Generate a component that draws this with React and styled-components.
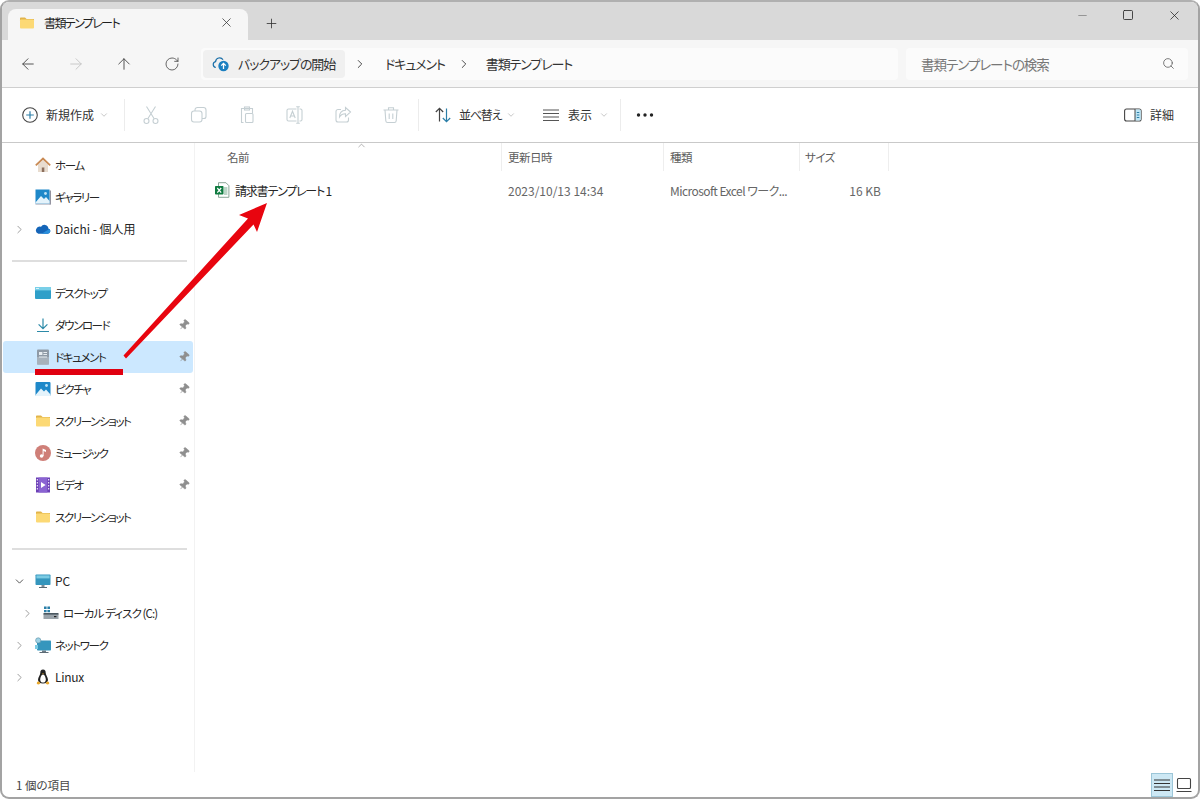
import React from 'react';
import styled, { createGlobalStyle } from 'styled-components';
import {
  ArrowLeft, ArrowRight, ArrowUp, RotateCw, X, Plus, Minus, Square,
  Search, ChevronRight, ChevronDown, ChevronUp, Pin,
} from 'lucide-react';

const GlobalStyle = createGlobalStyle`
  html, body { margin: 0; padding: 0; background: #fff; }
  body {
    font-family: "Noto Sans CJK JP", "Noto Sans", "Liberation Sans", sans-serif;
    font-feature-settings: "palt";
    color: #1f1f1f;
  }
`;

const Frame = styled.div`
  position: relative;
  width: 1200px;
  height: 799px;
  box-sizing: border-box;
  border: 2px solid #a3a3a3;
  border-top-color: #b0b0b0;
  border-radius: 9px;
  overflow: hidden;
  display: flex;
  flex-direction: column;
  background: #fff;
`;

const TitleBar = styled.div`
  height: 38px;
  flex: none;
  background: #d9d9d9;
  display: flex;
  align-items: flex-end;
  padding-left: 6px;
`;

const Tab = styled.div`
  width: 240px;
  height: 31px;
  box-sizing: border-box;
  background: #f6f6f6;
  border-radius: 8px 8px 0 0;
  display: flex;
  align-items: center;
  padding: 0 14px 4px 11px;
  font-size: 12px;
  letter-spacing: -1.6px;
`;

const TabTitle = styled.span`
  margin-left: 9px;
  flex: 1;
`;

const NewTab = styled.div`
  width: 46px;
  height: 30px;
  display: flex;
  align-items: center;
  justify-content: center;
  padding-bottom: 4px;
  box-sizing: border-box;
  color: #333;
`;

const WindowControls = styled.div`
  margin-left: auto;
  align-self: flex-start;
  display: flex;
  margin-right: 1px;
`;

const WindowButton = styled.div`
  width: 46px;
  height: 26px;
  display: flex;
  align-items: center;
  justify-content: center;
  color: #222;
`;

const AddressBar = styled.div`
  height: 48px;
  flex: none;
  box-sizing: border-box;
  background: #f6f6f6;
  border-bottom: 1px solid #cfcfcf;
  display: flex;
  align-items: center;
  padding-right: 10px;
`;

const NavButton = styled.div`
  width: 48px;
  height: 32px;
  flex: none;
  display: flex;
  align-items: center;
  justify-content: center;
  color: ${p => (p.$disabled ? '#c4c4c4' : '#444')};
`;

const NavGroup = styled.div`
  display: flex;
  margin-left: 2px;
  margin-right: 5px;
`;

const Breadcrumbs = styled.div`
  flex: 1;
  height: 32px;
  background: #fbfbfb;
  border-radius: 4px;
  display: flex;
  align-items: center;
  padding-left: 2px;
  font-size: 13px;
  letter-spacing: -1.1px;
`;

const BackupChip = styled.div`
  width: 142px;
  height: 28px;
  background: #f0f0f0;
  border-radius: 4px;
  display: flex;
  align-items: center;
  padding-left: 9px;
  box-sizing: border-box;
  gap: 8px;
  white-space: nowrap;
`;

const Crumb = styled.span`
  color: #333;
`;

const CrumbSep = styled.span`
  width: ${p => p.$width}px;
  box-sizing: border-box;
  padding-left: ${p => p.$pad}px;
  display: flex;
  color: #333;
`;

const SearchBox = styled.div`
  width: 282px;
  height: 32px;
  flex: none;
  margin-left: 8px;
  background: #fbfbfb;
  border-radius: 4px;
  box-sizing: border-box;
  display: flex;
  align-items: center;
  justify-content: space-between;
  padding: 0 13px 0 15px;
  font-size: 13.5px;
  color: #777;
  letter-spacing: -1px;
`;

const Toolbar = styled.div`
  height: 55px;
  flex: none;
  box-sizing: border-box;
  background: #fff;
  border-bottom: 1px solid #c9c9c9;
  padding-bottom: 1px;
  display: flex;
  align-items: center;
  font-size: 12px;
  color: #333;
`;

const ToolLabelButton = styled.div`
  display: flex;
  align-items: center;
  height: 32px;
  padding-left: ${p => p.$left || 0}px;
  width: ${p => p.$width}px;
  flex: none;
  box-sizing: border-box;
  gap: ${p => p.$gap || 7}px;
  letter-spacing: ${p => p.$spacing || 0}px;
`;

const ToolIcons = styled.div`
  display: flex;
  padding: 0 3px 0 2px;
`;

const ToolIcon = styled.div`
  width: 48px;
  height: 32px;
  display: flex;
  align-items: center;
  justify-content: center;
`;

const ToolSep = styled.div`
  width: 1px;
  height: 32px;
  flex: none;
  background: #ececec;
`;

const Caret = styled.span`
  display: flex;
  margin-left: -2px;
  color: #999;
`;

const DetailButton = styled.div`
  margin-left: auto;
  margin-right: 24px;
  display: flex;
  align-items: center;
  gap: 8px;
`;

const Body = styled.div`
  flex: 1;
  min-height: 0;
  display: flex;
`;

const Sidebar = styled.nav`
  width: 193px;
  flex: none;
  box-sizing: border-box;
  padding: 6px 1px 0 1px;
  border-right: 1px solid #f2f2f2;
  font-size: 11.5px;
  color: #262626;
`;

const NavRow = styled.div`
  height: 32px;
  display: flex;
  align-items: center;
  border-radius: 3px;
  background: ${p => (p.$selected ? '#cce8ff' : 'transparent')};
  padding-left: ${p => 8 + (p.$indent || 0)}px;
  padding-right: 3px;
`;

const Expander = styled.span`
  width: 16px;
  flex: none;
  display: flex;
  justify-content: center;
  color: #777;
`;

const NavIcon = styled.span`
  width: 16px;
  height: 16px;
  margin-left: 8px;
  margin-right: 4px;
  flex: none;
  display: flex;
`;

const NavLabel = styled.span`
  flex: 1;
  white-space: nowrap;
  font-size: ${p => (p.$latin ? '12px' : '11.5px')};
  letter-spacing: ${p => p.$spacing}px;
  margin-top: ${p => (p.$latin ? '-1px' : '0')};
`;

const PinMark = styled.span`
  display: flex;
  color: #8f8f8f;
  transform: rotate(40deg);
`;

const NavDivider = styled.div`
  height: 32px;
  display: flex;
  align-items: center;
  padding: 0 6px 0 9px;
  &::after {
    content: '';
    flex: 1;
    height: 2px;
    background: #dedede;
  }
`;

const Main = styled.main`
  flex: 1;
  min-width: 0;
  display: flex;
  flex-direction: column;
  position: relative;
`;

const Columns = `
  display: grid;
  grid-template-columns: 307px 162px 136px 89px;
`;

const HeaderRow = styled.div`
  ${Columns}
  height: 31px;
  font-size: 11.5px;
  color: #5c5c5c;
  letter-spacing: -0.5px;
`;

const HeaderCell = styled.div`
  border-right: 1px solid #eeeeee;
  display: flex;
  align-items: center;
  padding-left: ${p => p.$pad}px;
  height: 28px;
  box-sizing: border-box;
`;

const SortMark = styled.span`
  position: absolute;
  left: 161px;
  top: -3px;
  color: #777;
  display: flex;
`;

const FileRow = styled.div`
  ${Columns}
  height: 32px;
  align-items: center;
  font-size: 12px;
  color: #666;
`;

const FileName = styled.div`
  display: flex;
  align-items: center;
  padding-left: 19px;
  gap: 5px;
  color: #262626;
  letter-spacing: -1.2px;
`;

const FileCell = styled.div`
  padding-left: 6px;
  white-space: nowrap;
  letter-spacing: ${p => (p.$tight ? '-0.55px' : '0')};
`;

const SizeCell = styled.div`
  text-align: right;
  padding-right: 8px;
`;

const StatusBar = styled.div`
  height: 25px;
  flex: none;
  display: flex;
  align-items: center;
  justify-content: space-between;
  padding-left: 14px;
  font-size: 11.5px;
  color: #444;
`;

const ViewToggles = styled.div`
  display: flex;
  align-items: stretch;
  height: 24px;
  margin-right: 3px;
`;

const ViewToggle = styled.div`
  width: 22px;
  display: flex;
  align-items: center;
  justify-content: center;
  box-sizing: border-box;
  background: ${p => (p.$active ? '#cde8f4' : 'transparent')};
  border: 1px solid ${p => (p.$active ? '#9cc6d8' : 'transparent')};
`;

const Annotation = styled.svg`
  position: absolute;
  left: -2px;
  top: -2px;
  width: 1200px;
  height: 799px;
  pointer-events: none;
`;

const FolderIcon = ({ size = 16 }) => (
  <svg width={size} height={size} viewBox="0 0 16 16">
    <path d="M1 3.5c0-.6.4-1 1-1h4l1.600 1.600H15v1H1z" fill="#e2b44a" />
    <rect x="1" y="4.600" width="14" height="9" rx="1" fill="#fcd975" />
  </svg>
);

const HomeIcon = () => (
  <svg width="16" height="16" viewBox="0 0 16 16">
    <path d="M3 7.500V15h4v-4h2.400v4H13V7.500L8 3z" fill="#e8dccf" />
    <rect x="6.800" y="10.500" width="2.600" height="4.500" fill="#8c6f5d" />
    <path d="M.8 8.400 8 1.600l7.200 6.800" fill="none" stroke="#c98a54" strokeWidth="1.800" />
  </svg>
);

const GalleryIcon = () => (
  <svg width="16" height="16" viewBox="0 0 16 16">
    <rect x="14.700" y="1.500" width="1" height="14" fill="#667" />
    <rect x="0.500" y="14.500" width="15" height="1" fill="#99a" />
    <rect x="0.500" y="0.500" width="14" height="14" fill="#1e88c9" />
    <path d="M.5 13.500 6 7l3 3 2-2 3.500 4v2.500H.5z" fill="#e4f3fb" />
    <circle cx="10.500" cy="4.500" r="1.400" fill="#bfe3f6" />
  </svg>
);

const CloudIcon = () => (
  <svg width="17" height="16" viewBox="0 0 17 16">
    <path d="M3.600 13h10a2.800 2.800 0 0 0 .6-5.500A4.200 4.200 0 0 0 6.400 5.600 3.700 3.700 0 0 0 3.600 13z" fill="#1565b8" />
    <path d="M3.600 13h10.200a2.800 2.800 0 0 0 1.400-5L7 13z" fill="#2a8fdc" />
  </svg>
);

const DesktopIcon = () => (
  <svg width="16" height="16" viewBox="0 0 16 16">
    <rect x="0" y="2" width="16" height="12" rx="1" fill="#2f9fc9" />
    <rect x="0" y="2" width="16" height="3.400" fill="#79cfe8" />
    <rect x="1" y="3" width="3" height="1" fill="#fff" opacity=".7" />
  </svg>
);

const DownloadIcon = () => (
  <svg width="16" height="16" viewBox="0 0 16 16" fill="none" stroke="#2c8aa8" strokeWidth="1.200">
    <path d="M8 1.500v10M3.600 7.400 8 11.700l4.400-4.300M2 14.500h12" />
  </svg>
);

const DocumentIcon = () => (
  <svg width="16" height="16" viewBox="0 0 16 16">
    <rect x="2" y="0.500" width="12" height="15" rx="1" fill="#8f9aa6" />
    <rect x="2" y="8" width="12" height="7.500" fill="#a7b1bb" />
    <rect x="4" y="3" width="3.400" height="3" fill="#e8edf1" />
    <rect x="8.400" y="3" width="3.600" height="1" fill="#e8edf1" />
    <rect x="8.400" y="5" width="3.600" height="1" fill="#e8edf1" />
    <rect x="4" y="7.500" width="8" height="1" fill="#e8edf1" />
  </svg>
);

const PictureIcon = () => (
  <svg width="16" height="16" viewBox="0 0 16 16">
    <rect x="0.500" y="1" width="15" height="14" rx="1" fill="#1e88c9" />
    <path d="M.5 14 6 7.500l3 3 2-2 4.500 5V15H.5z" fill="#e4f3fb" />
    <circle cx="11.500" cy="4.500" r="1.400" fill="#bfe3f6" />
  </svg>
);

const MusicIcon = () => (
  <svg width="16" height="16" viewBox="0 0 16 16">
    <circle cx="8" cy="8" r="8" fill="#cf7f78" />
    <circle cx="6.600" cy="11" r="1.800" fill="#fff" />
    <path d="M7.600 11V3.600l3.400 1.400V7L8.600 6v5z" fill="#fff" />
  </svg>
);

const VideoIcon = () => (
  <svg width="16" height="16" viewBox="0 0 16 16">
    <rect x="1" y="0.500" width="14" height="15" fill="#6b3fb5" />
    <rect x="3.600" y="0.500" width="8.800" height="15" fill="#8a63d2" />
    <path d="M6 5v6l4.600-3z" fill="#fff" />
    <path d="M1.800 2h1v1.400h-1zM1.800 5h1v1.400h-1zM1.800 8h1v1.400h-1zM1.800 11h1v1.400h-1zM13.200 2h1v1.400h-1zM13.200 5h1v1.400h-1zM13.200 8h1v1.400h-1zM13.200 11h1v1.400h-1z" fill="#fff" />
  </svg>
);

const PCIcon = () => (
  <svg width="16" height="16" viewBox="0 0 16 16">
    <rect x="0.500" y="1.500" width="15" height="10.500" rx="0.800" fill="#3596bd" />
    <rect x="1.400" y="2.400" width="13.200" height="3" fill="#7bcbe3" />
    <rect x="6.500" y="12" width="3" height="2" fill="#7d8c96" />
    <rect x="4" y="14" width="8" height="1" fill="#5c6b75" />
  </svg>
);

const DiskIcon = () => (
  <svg width="16" height="16" viewBox="0 0 16 16">
    <rect x="0.500" y="9" width="15" height="5" fill="#9aa3aa" />
    <rect x="0.500" y="8" width="15" height="1.600" fill="#4b5861" />
    <rect x="11" y="11" width="2.400" height="1.200" fill="#222" />
    <path d="M1 1.500h2.600v2.600H1zM4.400 1.500H7v2.600H4.400zM1 4.900h2.600v2.400H1zM4.400 4.900H7v2.400H4.400z" fill="#2a7fa8" />
  </svg>
);

const NetworkIcon = () => (
  <svg width="16" height="16" viewBox="0 0 16 16">
    <rect x="2" y="3.500" width="14" height="10" rx="0.800" fill="#3596bd" />
    <rect x="7" y="13.500" width="4" height="1.500" fill="#6d7c86" />
    <rect x="4.500" y="15" width="9" height="1" fill="#5c6b75" />
    <circle cx="3.200" cy="3.400" r="2.600" fill="#9fd3e6" stroke="#5d8ea3" strokeWidth="0.600" />
    <rect x="0" y="8" width="3" height="4" fill="#7bcbe3" />
  </svg>
);

const LinuxIcon = () => (
  <svg width="16" height="16" viewBox="0 0 16 16">
    <path d="M8 .6c-2 0-2.800 1.600-2.700 3.400C5.300 6 3 8 3 11c0 2 2 3.400 5 3.400S13 13 13 11c0-3-2.300-5-2.300-7C10.800 2.200 10 .6 8 .6z" fill="#222" />
    <path d="M8 5.600c-1.500 0-2.800 3-2.800 5.200S6.600 13.600 8 13.600s2.800-.8 2.800-2.800S9.500 5.600 8 5.600z" fill="#fff" />
    <path d="M6.900 4.400h2.200L8 5.600z" fill="#e8a72c" />
    <path d="M2 13c1-.8 2.600-.8 3.400 1.600L3.800 15.600 1.800 15zM14 13c-1-.8-2.600-.8-3.400 1.600l1.600 1 2-.6z" fill="#e8a72c" />
  </svg>
);

const BackupIcon = () => (
  <svg width="18" height="18" viewBox="0 0 18 18">
    <path d="M3.800 12.500A3 3 0 0 1 3.600 6.600 4 4 0 0 1 11 4.800" fill="none" stroke="#1b6fa8" strokeWidth="1.200" />
    <circle cx="11.500" cy="11" r="5.200" fill="#1b7fc0" />
    <path d="M11.500 14V8.500M9.200 10.600l2.300-2.300 2.300 2.300" fill="none" stroke="#fff" strokeWidth="1.300" />
  </svg>
);

const ExcelIcon = () => (
  <svg width="16" height="16" viewBox="0 0 16 16">
    <path d="M4.500.7h7.400l3 3v11.600h-10.400z" fill="#fff" stroke="#7d9c8b" strokeWidth="0.900" />
    <path d="M10 6h3.400M10 8h3.400M10 10h3.400M10 12h3.400" stroke="#6aa583" strokeWidth="0.900" />
    <rect x="1" y="4" width="8.500" height="8.500" rx="0.800" fill="#107c41" />
    <path d="M3.300 6 7.200 10.600M7.200 6 3.300 10.600" stroke="#fff" strokeWidth="1.200" />
  </svg>
);

const NewIcon = () => (
  <svg width="18" height="18" viewBox="0 0 18 18" fill="none">
    <circle cx="9" cy="9" r="7.300" stroke="#444" strokeWidth="1.100" />
    <path d="M9 5.200v7.600M5.200 9h7.600" stroke="#2c7fa8" strokeWidth="1.200" />
  </svg>
);

const dimStroke = { fill: 'none', stroke: '#c5cfd3', strokeWidth: 1.1 };

const CutIcon = () => (
  <svg width="18" height="20" viewBox="0 0 18 20" {...dimStroke}>
    <circle cx="4.500" cy="16" r="2.500" />
    <circle cx="13.500" cy="16" r="2.500" />
    <path d="M5.800 13.800 13.500 1.500M12.200 13.800 4.500 1.500" />
  </svg>
);

const CopyIcon = () => (
  <svg width="18" height="18" viewBox="0 0 18 18" {...dimStroke}>
    <rect x="1.500" y="5" width="10.500" height="11" rx="2.500" />
    <path d="M5 5V4a2.500 2.500 0 0 1 2.500-2.500h6A2.500 2.500 0 0 1 16 4v6.500a2 2 0 0 1-2 2h-2" />
  </svg>
);

const PasteIcon = () => (
  <svg width="18" height="18" viewBox="0 0 18 18" {...dimStroke}>
    <path d="M5.500 16.500H3.500v-14h11v5" />
    <rect x="6.500" y="1" width="5" height="3" />
    <rect x="7.500" y="7.500" width="7.500" height="9" rx="1" />
  </svg>
);

const RenameIcon = () => (
  <svg width="20" height="18" viewBox="0 0 20 18" {...dimStroke}>
    <path d="M11.500 3H3.500a1.500 1.500 0 0 0-1.500 1.500v9A1.500 1.500 0 0 0 3.500 15h8M14.500 3h1a1.500 1.500 0 0 1 1.500 1.500v9a1.500 1.500 0 0 1-1.500 1.500h-1" />
    <path d="M13 .8v16.400M11.200.8h3.600M11.200 17.200h3.600M4.800 12l2.700-6.800 2.700 6.800M5.700 10h3.600" />
  </svg>
);

const ShareIcon = () => (
  <svg width="18" height="18" viewBox="0 0 18 18" {...dimStroke}>
    <path d="M7 3.500H4A2 2 0 0 0 2 5.500V14a2 2 0 0 0 2 2h8.500a2 2 0 0 0 2-2v-2.500" />
    <path d="M16.500 6 11.500 1.500v2.800C7.500 4.500 5.500 7.500 5.500 11c1.500-2.500 3.500-3.200 6-3.200v2.800z" />
  </svg>
);

const TrashIcon = () => (
  <svg width="18" height="18" viewBox="0 0 18 18" {...dimStroke}>
    <path d="M1.500 4h15M6.500 4V1.800h5V4" />
    <path d="M3 4l.8 10.800a1.800 1.800 0 0 0 1.800 1.700h6.800a1.800 1.800 0 0 0 1.800-1.700L15 4" />
    <path d="M7.200 7.500v5.500M10.800 7.500v5.500" />
  </svg>
);

const SortIcon = () => (
  <svg width="18" height="18" viewBox="0 0 18 18" fill="none" strokeWidth="1.200">
    <path d="M5.500 15.500v-13M1.800 6l3.700-3.700L9.200 6" stroke="#444" />
    <path d="M12.500 2.500v13M8.800 12l3.700 3.700 3.700-3.700" stroke="#2c7fa8" />
  </svg>
);

const ListIcon = ({ color = '#555', width = 16 }) => (
  <svg width={width} height="14" viewBox="0 0 16 14" fill="none" stroke={color} strokeWidth="1.100">
    <path d="M0 2h16M0 5.500h16M0 9h16M0 12.500h16" />
  </svg>
);

const DetailIcon = () => (
  <svg width="18" height="16" viewBox="0 0 18 16" fill="none">
    <rect x="0.600" y="2" width="16.500" height="12" rx="2" stroke="#444" strokeWidth="1.100" />
    <path d="M11 2.500h4.500a1.300 1.300 0 0 1 1.300 1.300v8.400a1.300 1.300 0 0 1-1.300 1.300H11z" fill="#bfe6f5" />
    <path d="M11 2v12" stroke="#444" strokeWidth="1" />
    <path d="M12.800 5.500h2.500M12.800 8h2.500M12.800 10.500h2.500" stroke="#2c7fa8" strokeWidth="1" />
  </svg>
);

const Dots = () => (
  <svg width="18" height="4" viewBox="0 0 18 4" fill="#222">
    <circle cx="2.500" cy="2" r="1.700" />
    <circle cx="9" cy="2" r="1.700" />
    <circle cx="15.500" cy="2" r="1.700" />
  </svg>
);

const TileIcon = () => (
  <svg width="18" height="18" viewBox="0 0 18 18" fill="none" stroke="#444" strokeWidth="1.100">
    <rect x="2.500" y="2.500" width="13" height="10" rx="1" />
    <path d="M1.500 15.500h15" />
  </svg>
);

const navItems = [
  { label: 'ホーム', icon: <HomeIcon /> },
  { label: 'ギャラリー', icon: <GalleryIcon /> },
  { label: 'Daichi - 個人用', icon: <CloudIcon />, expander: 'right', spacing: 0, latin: true },
  { divider: true },
  { label: 'デスクトップ', icon: <DesktopIcon /> },
  { label: 'ダウンロード', icon: <DownloadIcon />, pin: true },
  { label: 'ドキュメント', icon: <DocumentIcon />, pin: true, selected: true },
  { label: 'ピクチャ', icon: <PictureIcon />, pin: true },
  { label: 'スクリーンショット', icon: <FolderIcon />, pin: true },
  { label: 'ミュージック', icon: <MusicIcon />, pin: true },
  { label: 'ビデオ', icon: <VideoIcon />, pin: true },
  { label: 'スクリーンショット', icon: <FolderIcon /> },
  { divider: true },
  { label: 'PC', icon: <PCIcon />, expander: 'down', spacing: 0, latin: true },
  { label: 'ローカル ディスク (C:)', icon: <DiskIcon />, expander: 'right', indent: 8, spacing: -0.9 },
  { label: 'ネットワーク', icon: <NetworkIcon />, expander: 'right' },
  { label: 'Linux', icon: <LinuxIcon />, expander: 'right', spacing: -0.3, latin: true },
];

function App() {
  return (
    <>
      <GlobalStyle />
      <Frame>
        <TitleBar>
          <Tab>
            <FolderIcon />
            <TabTitle>書類テンプレート</TabTitle>
            <X size={15} strokeWidth={1.2} color="#333" />
          </Tab>
          <NewTab><Plus size={15} strokeWidth={1.3} /></NewTab>
          <WindowControls>
            <WindowButton><Minus size={13} strokeWidth={1.3} color="#777" /></WindowButton>
            <WindowButton><Square size={12} strokeWidth={1.6} /></WindowButton>
            <WindowButton><X size={15} strokeWidth={1.2} /></WindowButton>
          </WindowControls>
        </TitleBar>

        <AddressBar>
          <NavGroup>
            <NavButton><ArrowLeft size={18} strokeWidth={1.2} /></NavButton>
            <NavButton $disabled><ArrowRight size={18} strokeWidth={1.2} /></NavButton>
            <NavButton><ArrowUp size={18} strokeWidth={1.2} /></NavButton>
            <NavButton><RotateCw size={16} strokeWidth={1.2} /></NavButton>
          </NavGroup>
          <Breadcrumbs>
            <BackupChip><BackupIcon /><Crumb>バックアップの開始</Crumb></BackupChip>
            <CrumbSep $width={40} $pad={8}><ChevronRight size={14} strokeWidth={1.5} /></CrumbSep>
            <Crumb>ドキュメント</Crumb>
            <CrumbSep $width={41} $pad={12}><ChevronRight size={14} strokeWidth={1.5} /></CrumbSep>
            <Crumb>書類テンプレート</Crumb>
          </Breadcrumbs>
          <SearchBox>
            <span>書類テンプレートの検索</span>
            <Search size={13} strokeWidth={1.4} color="#555" />
          </SearchBox>
        </AddressBar>

        <Toolbar>
          <ToolLabelButton $left={19} $width={122}>
            <NewIcon /><span>新規作成</span>
            <Caret><ChevronDown size={10} strokeWidth={1.3} /></Caret>
          </ToolLabelButton>
          <ToolSep />
          <ToolIcons>
            <ToolIcon><CutIcon /></ToolIcon>
            <ToolIcon><CopyIcon /></ToolIcon>
            <ToolIcon><PasteIcon /></ToolIcon>
            <ToolIcon><RenameIcon /></ToolIcon>
            <ToolIcon><ShareIcon /></ToolIcon>
            <ToolIcon><TrashIcon /></ToolIcon>
          </ToolIcons>
          <ToolSep />
          <ToolLabelButton $left={15} $width={110} $spacing={-1.2}>
            <SortIcon /><span>並べ替え</span>
            <Caret><ChevronDown size={10} strokeWidth={1.3} /></Caret>
          </ToolLabelButton>
          <ToolLabelButton $left={14} $width={91} $gap={9}>
            <ListIcon /><span>表示</span>
            <Caret><ChevronDown size={10} strokeWidth={1.3} /></Caret>
          </ToolLabelButton>
          <ToolSep />
          <ToolLabelButton $left={15} $width={60}><Dots /></ToolLabelButton>
          <DetailButton><DetailIcon /><span>詳細</span></DetailButton>
        </Toolbar>

        <Body>
          <Sidebar>
            {navItems.map((item, i) => item.divider ? (
              <NavDivider key={i} />
            ) : (
              <NavRow key={i} $selected={item.selected} $indent={item.indent}>
                <Expander>
                  {item.expander === 'right' && <ChevronRight size={13} strokeWidth={1.3} />}
                  {item.expander === 'down' && <ChevronDown size={13} strokeWidth={1.5} color="#333" />}
                </Expander>
                <NavIcon>{item.icon}</NavIcon>
                <NavLabel $latin={item.latin} $spacing={item.spacing ?? -1.4}>{item.label}</NavLabel>
                {item.pin && <PinMark><Pin size={12} fill="currentColor" strokeWidth={1.2} /></PinMark>}
              </NavRow>
            ))}
          </Sidebar>

          <Main>
            <SortMark><ChevronUp size={11} strokeWidth={1.2} /></SortMark>
            <HeaderRow>
              <HeaderCell $pad={32}>名前</HeaderCell>
              <HeaderCell $pad={6}>更新日時</HeaderCell>
              <HeaderCell $pad={6}>種類</HeaderCell>
              <HeaderCell $pad={5}>サイズ</HeaderCell>
            </HeaderRow>
            <FileRow>
              <FileName><ExcelIcon /><span>請求書テンプレート 1</span></FileName>
              <FileCell>2023/10/13 14:34</FileCell>
              <FileCell $tight>Microsoft Excel ワーク...</FileCell>
              <SizeCell>16 KB</SizeCell>
            </FileRow>
          </Main>
        </Body>

        <StatusBar>
          <span>1 個の項目</span>
          <ViewToggles>
            <ViewToggle $active><ListIcon color="#333" /></ViewToggle>
            <ViewToggle><TileIcon /></ViewToggle>
          </ViewToggles>
        </StatusBar>

        <Annotation viewBox="0 0 1200 799">
          <polygon points="267,203 239,215 248,218.500 123.500,355.500 126,358.500 253.500,224.500 257,232" fill="#e8050f" />
          <rect x="35" y="369" width="88" height="6" fill="#e00010" />
        </Annotation>
      </Frame>
    </>
  );
}

export default App;
